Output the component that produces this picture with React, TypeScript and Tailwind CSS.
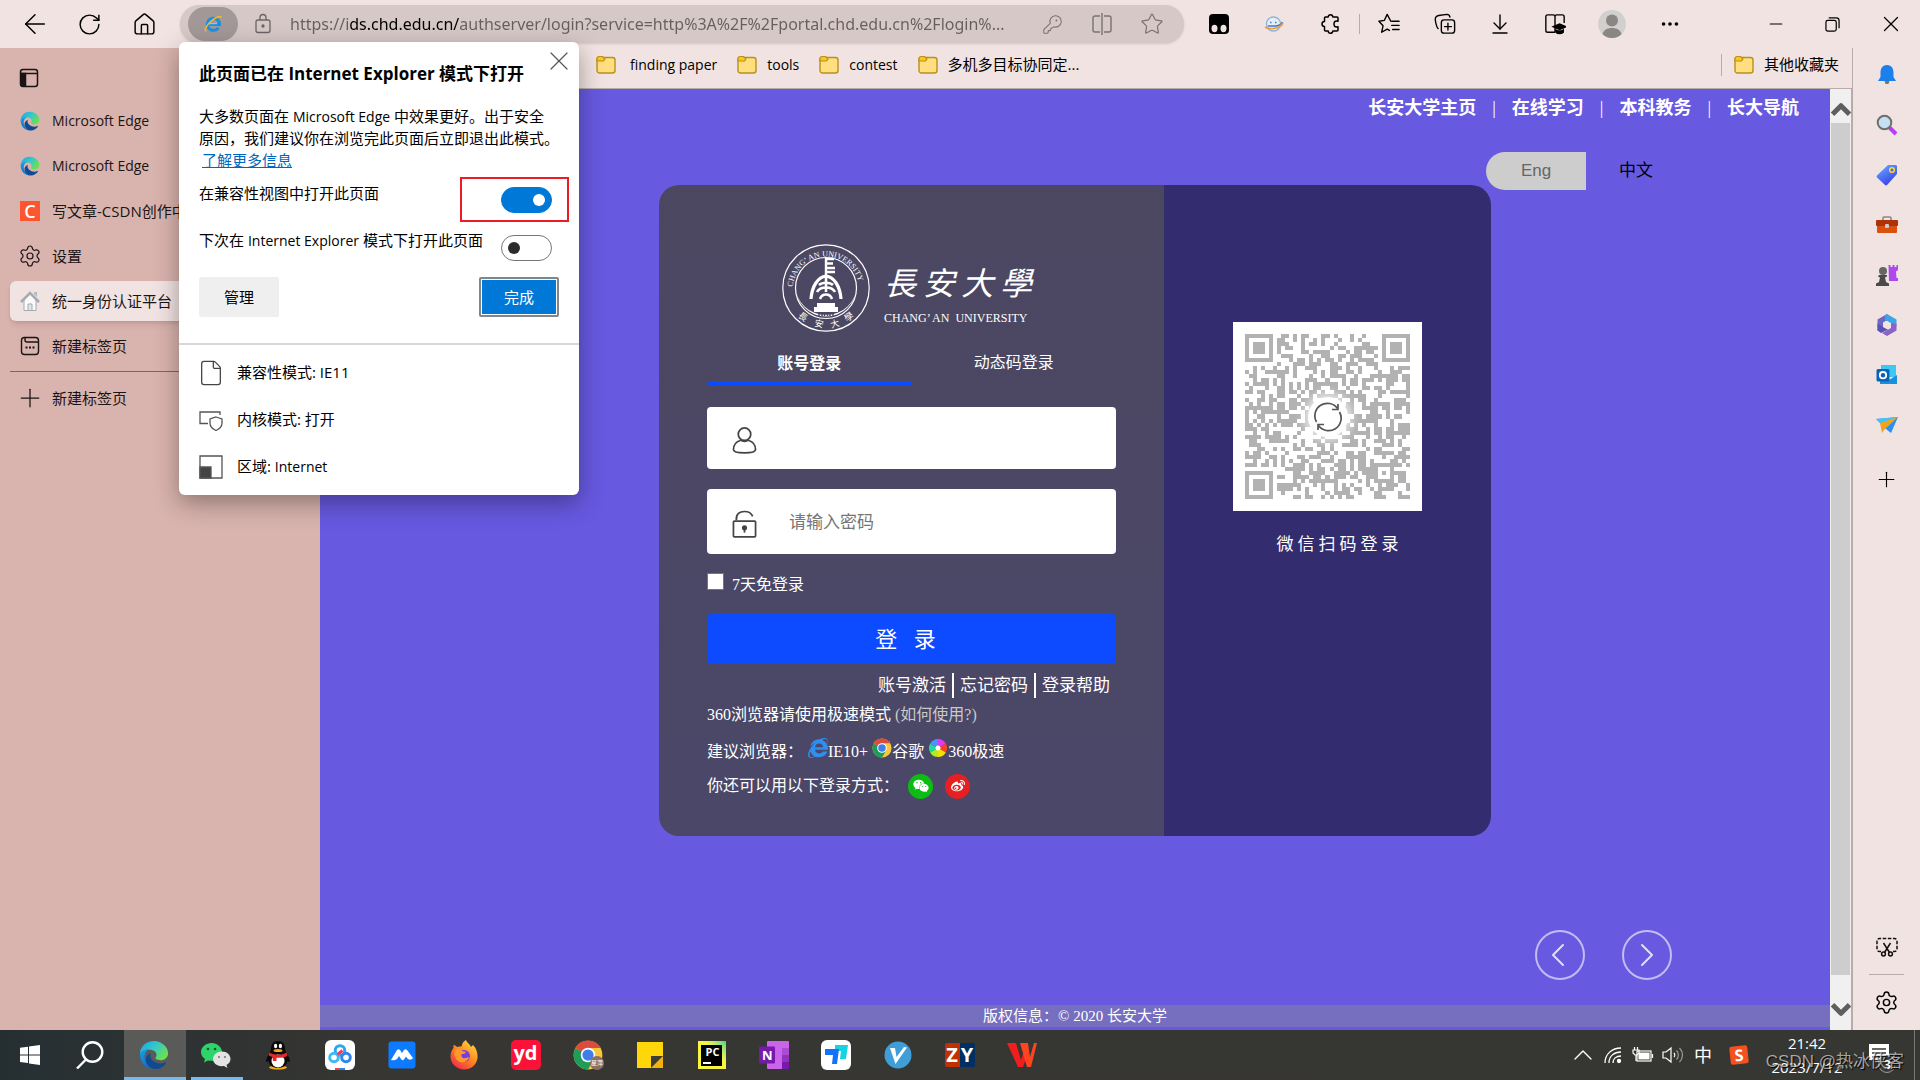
import React from "react";
import {
  ArrowLeft, RotateCw, House, KeyRound, Star, X, Plus, Minus, File, Settings,
  ArrowDownToLine, Ellipsis, ChevronUp, ChevronDown, ChevronLeft, ChevronRight,
} from "lucide-react";
import { FaWeixin, FaWeibo, FaInternetExplorer } from "react-icons/fa";

const ui = "font-['Open_Sans','Noto_Sans_CJK_SC',sans-serif]";
const song = "font-['Liberation_Serif','Noto_Sans_CJK_SC',serif]";

/* ---------- shared icons ---------- */

function EdgeIcon({ className, id }: { className: string; id: string }) {
  return (
    <svg viewBox="0 0 32 32" className={className} aria-hidden="true">
      <defs>
        <linearGradient id={id + "a"} x1="0" y1="0" x2="1" y2="0.6">
          <stop offset="0" stopColor="#1f9fe0" />
          <stop offset="0.5" stopColor="#33c7d0" />
          <stop offset="1" stopColor="#6be04f" />
        </linearGradient>
        <linearGradient id={id + "b"} x1="0" y1="0" x2="0.6" y2="1">
          <stop offset="0" stopColor="#1aa0e2" />
          <stop offset="1" stopColor="#0a6cc9" />
        </linearGradient>
      </defs>
      <path d="M1 15C1 6.500 8 1 16 1s15 6 15 13c0 4.500-3.500 7.500-8 7.500-3.500 0-5.500-1.200-5.500-2.200 0-.8 1.200-1.300 1.200-3.300 0-2.800-2.700-5.500-7.200-5.500C6 10.500 2 13 1 15z" fill={`url(#${id}a)`} />
      <path d="M1 15c1-3 5-5.500 10-5.500-3.500 1.500-5 5-5 8.500C6 25 12 31 17.500 31 8 31.500 1 24.500 1 15z" fill={`url(#${id}b)`} />
      <path d="M12.500 14c-4 1.500-6 5-5 9 1.200 5 5.500 8 10 8 4.800 0 9-2.500 11.300-6.300.4-.7-.2-1.200-.8-.9-1.500.8-3 1.200-5 1.200-6 0-11-4-11-8.500 0-.9.200-1.800.5-2.500z" fill="#114a92" />
    </svg>
  );
}

function IeModeIcon({ className }: { className: string }) {
  return (
    <svg viewBox="0 0 24 24" className={className} fill="none" aria-hidden="true">
      <path d="M18.500 16.500A7.300 7.300 0 1 1 19.800 12.600H8" stroke="#1d8fe0" strokeWidth="3.600" />
      <path d="M7 11.500h10" stroke="#6fd0fb" strokeWidth="1.500" />
      <path d="M3.500 21C1.500 19 5 12 11 7.500S21.500 2 22 4.500" stroke="#f4b92b" strokeWidth="1.800" />
    </svg>
  );
}

function FolderIcon() {
  return (
    <svg viewBox="0 0 20 20" className="size-5 shrink-0" aria-hidden="true">
      <rect x="1" y="2.500" width="18" height="15.500" rx="2.500" fill="#ffdf80" stroke="#b8901c" strokeWidth="1.400" />
      <path d="M1 6V3.500A2 2 0 0 1 3 1.500h3.500L9 4 7.500 6z" fill="#ffc61a" stroke="#b8901c" strokeWidth="1.200" />
    </svg>
  );
}

function ChromeIcon({ className }: { className: string }) {
  return (
    <svg viewBox="0 0 24 24" className={className} aria-hidden="true">
      <circle cx="12" cy="12" r="11.500" fill="#f9c83a" />
      <path d="M12 12 2 6.300A11.500 11.500 0 0 0 12 23.500L17 15z" fill="#1d9c5a" />
      <path d="M12 12 2 6.300A11.500 11.500 0 0 1 22 6.300H12z" fill="#dd4b3e" />
      <circle cx="12" cy="12" r="5.800" fill="#fff" />
      <circle cx="12" cy="12" r="4.500" fill="#3f7ee8" />
    </svg>
  );
}

/* ---------- browser toolbar ---------- */

function Tool({ w, label, children }: { w: string; label: string; children: React.ReactNode }) {
  return (
    <button aria-label={label} className={"flex h-full shrink-0 items-center justify-center " + w}>
      {children}
    </button>
  );
}

function Toolbar() {
  return (
    <header className="flex h-12 shrink-0 items-center bg-[#f1e3e2] text-black">
      <div className="flex h-full w-[180px] shrink-0 items-center pl-[7px]">
        <Tool w="w-[55px]" label="返回"><ArrowLeft size={32} strokeWidth={1.1} /></Tool>
        <Tool w="w-[55px]" label="刷新"><RotateCw size={25} strokeWidth={1.4} /></Tool>
        <Tool w="w-[55px]" label="主页"><House size={25} strokeWidth={1.4} /></Tool>
      </div>
      <div className="flex h-[38px] min-w-0 flex-1 items-center rounded-full bg-[#d6c8c7] pr-2 shadow-sm">
        <button aria-label="Internet Explorer 模式" className="ml-2 flex h-[34px] w-[50px] shrink-0 items-center justify-center rounded-full bg-[#a29897]">
          <IeModeIcon className="size-5" />
        </button>
        <svg viewBox="0 0 20 22" className="mr-[17px] ml-[15px] h-[22px] w-5 shrink-0" fill="none" stroke="#6c6463" strokeWidth="1.300" aria-hidden="true">
          <rect x="3" y="7" width="14" height="12.500" rx="2" />
          <path d="M7 7V4.500a3 3 0 0 1 6 0V7" />
          <circle cx="10" cy="13" r="1" fill="#6c6463" />
        </svg>
        <input
          aria-label="地址栏"
          readOnly
          value="https://ids.chd.edu.cn/authserver/login?service=http%3A%2F%2Fportal.chd.edu.cn%2Flogin%..."
          className="min-w-0 flex-1 bg-[linear-gradient(to_right,#655f5e_58px,#000_58px,#000_170px,#655f5e_170px)] bg-clip-text font-['Noto_Sans',sans-serif] text-base text-transparent outline-none"
        />
        <Tool w="w-[49px]" label="密码"><KeyRound size={21} strokeWidth={1.2} className="text-[#7a7271]" /></Tool>
        <Tool w="w-[50px]" label="分屏">
          <svg viewBox="0 0 20 24" className="h-6 w-5" fill="none" stroke="#7a7271" strokeWidth="1.400"><path d="M8 4H3a2 2 0 0 0-2 2v12a2 2 0 0 0 2 2h5M12 4h5a2 2 0 0 1 2 2v12a2 2 0 0 1-2 2h-5M10 1v22" /></svg>
        </Tool>
        <Tool w="w-[49px]" label="收藏"><Star size={24} strokeWidth={1.2} className="text-[#7a7271]" /></Tool>
      </div>
      <div className="flex h-full shrink-0 items-center pl-[7px]">
        <Tool w="w-[55px]" label="扩展">
          <svg viewBox="0 0 20 20" className="size-5"><rect width="20" height="20" rx="4" fill="#000" /><ellipse cx="5.500" cy="14.500" rx="3" ry="3.700" fill="#f1e3e2" /><ellipse cx="14.500" cy="14.500" rx="3" ry="3.700" fill="#f1e3e2" /></svg>
        </Tool>
        <Tool w="w-[55px]" label="IE Tab">
          <svg viewBox="0 0 20 20" className="size-5" fill="none"><circle cx="9.500" cy="10" r="7" fill="#e6eef7" stroke="#8fb4dc" strokeWidth="1.400" /><path d="M6 8.500h1.500M11 8.500h1.500M4 12h8c3 0 6-2 6.500-4" stroke="#3b7cc9" strokeWidth="1.600" /><path d="M1 13c4 3 15 2 18-4" stroke="#f0a040" strokeWidth="1.800" /></svg>
        </Tool>
        <Tool w="w-[58px]" label="扩展菜单">
          <svg viewBox="0 0 22 22" className="size-[22px]" fill="none" stroke="currentColor" strokeWidth="1.500" strokeLinejoin="round"><path d="M6.500 4h2.700a2.300 2.300 0 0 1 4.600 0H18a1 1 0 0 1 1 1v3.200c-3.300-.7-4 .8-4 2.800s.7 3.500 4 2.800V17a1 1 0 0 1-1 1h-4.200a2.300 2.300 0 0 1-4.600 0H6.500a1 1 0 0 1-1-1v-3.500a2.500 2.500 0 0 1 0-5V5a1 1 0 0 1 1-1z" /></svg>
        </Tool>
        <span className="h-5 w-px bg-[#b8acab]" />
        <Tool w="w-[57px]" label="收藏夹">
          <svg viewBox="0 0 24 24" className="size-[22px]" fill="none" stroke="currentColor" strokeWidth="1.500" strokeLinejoin="round" strokeLinecap="round"><path d="M14 9 10 1.500 7 8 1 9l4.500 5L4 21l6-3.500 2.500 1.500M15 9h8M15 13.500h8M16 18h7" /></svg>
        </Tool>
        <Tool w="w-[55px]" label="集锦">
          <svg viewBox="0 0 24 24" className="size-[22px]" fill="none" stroke="currentColor" strokeWidth="1.500" strokeLinecap="round"><rect x="8" y="7.500" width="14.500" height="14.500" rx="3" /><path d="M15.200 11v7.500M11.500 14.800H19M4.500 17C2.500 15.500 1 7 1.500 5.500S3 3 5 2.700L14 1.500c2 0 3 1 3.400 3" /></svg>
        </Tool>
        <Tool w="w-[55px]" label="下载"><ArrowDownToLine size={24} strokeWidth={1.4} /></Tool>
        <Tool w="w-[55px]" label="阅读">
          <svg viewBox="0 0 24 24" className="size-[22px]" fill="none" stroke="currentColor" strokeWidth="1.500"><path d="M12 3v18M12 21H4a2 2 0 0 1-2-2V4a2 2 0 0 1 2-2h6a2 2 0 0 1 2 2 2 2 0 0 1 2-2h6a2 2 0 0 1 2 2v7" /><path d="m10 15 7-3 7 3-7 3z" fill="#000" /><path d="M13 18.500c2 1.500 6 1.500 8 0v2.500c-2 2-6 2-8 0z" fill="#000" /></svg>
        </Tool>
        <Tool w="w-[60px]" label="个人资料">
          <svg viewBox="0 0 28 28" className="size-7"><circle cx="14" cy="14" r="14" fill="#d2d0ce" /><circle cx="14" cy="10.500" r="6" fill="#8a8683" /><path d="M4.500 24.300C5.500 20 9 18 14 18s8.500 2 9.500 6.300A14 14 0 0 1 4.500 24.300z" fill="#8a8683" /></svg>
        </Tool>
        <Tool w="w-[55px]" label="更多"><Ellipsis size={22} strokeWidth={2} /></Tool>
        <div className="ml-[50px] flex h-full">
          <Tool w="w-[57px]" label="最小化"><Minus size={20} strokeWidth={1.3} /></Tool>
          <Tool w="w-[57px]" label="还原">
            <svg viewBox="0 0 16 16" className="size-[15px]" fill="none" stroke="currentColor" strokeWidth="1.300"><rect x="1" y="3.500" width="11" height="11.500" rx="2" /><path d="M4 1h8a3 3 0 0 1 3 3v8" /></svg>
          </Tool>
          <Tool w="w-[59px]" label="关闭"><X size={26} strokeWidth={1.2} /></Tool>
        </div>
      </div>
    </header>
  );
}

/* ---------- vertical tabs ---------- */

function Tab({ icon, text, active, latin }: { icon: React.ReactNode; text: string; active?: boolean; latin?: boolean }) {
  return (
    <li className="flex h-[45px] items-center">
      <button
        className={
          "flex h-10 w-full items-center gap-3 overflow-hidden whitespace-nowrap rounded-md pl-[10px] text-left " +
          (active ? "bg-[#f1e3e2] shadow-md" : "")
        }
      >
        {icon}
        <span className={latin ? "text-sm" : ""}>{text}</span>
      </button>
    </li>
  );
}

function TabStrip() {
  return (
    <aside className="w-80 shrink-0 bg-[#d9b3ad] pl-[10px] text-[15px] leading-5 text-[#1b1414]">
      <button aria-label="标签页操作" className="mt-[9px] flex h-[41px] items-center pl-[9px]">
        <svg viewBox="0 0 20 20" className="size-5" fill="none" stroke="#1b1414" strokeWidth="1.500"><rect x="1.500" y="1.500" width="17" height="17" rx="2.500" /><path d="M2 5.500h16" /><path d="M2 5.500h4.500V18H3.500L2 17z" fill="#1b1414" /></svg>
      </button>
      <ul>
        <Tab latin icon={<EdgeIcon id="t1" className="size-5 shrink-0" />} text="Microsoft Edge" />
        <Tab latin icon={<EdgeIcon id="t2" className="size-5 shrink-0" />} text="Microsoft Edge" />
        <Tab
          icon={<span className="flex size-5 shrink-0 items-center justify-center bg-[#fc5531] text-lg font-semibold text-white">C</span>}
          text="写文章-CSDN创作中心"
        />
        <Tab icon={<Settings size={24} strokeWidth={1.2} className="-mx-0.5 shrink-0" />} text="设置" />
        <Tab
          active
          icon={
            <svg viewBox="0 0 20 20" className="size-5 shrink-0"><path d="M4 9v10.500h12V9L10 3z" fill="#fafafa" stroke="#a5abb0" /><path d="M1 11 10 2l9 9" fill="none" stroke="#a5abb0" strokeWidth="2.500" /><path d="M14 1h3v5l-3-3z" fill="#b5babf" /><path d="M8 13h4v6.500H8z" fill="#e2e4e6" stroke="#a5abb0" /></svg>
          }
          text="统一身份认证平台"
        />
        <Tab
          icon={
            <svg viewBox="0 0 20 20" className="size-5 shrink-0" fill="none" stroke="#1b1414" strokeWidth="1.400"><rect x="1.500" y="1.500" width="17" height="17" rx="3" /><path d="M5 1.500V4a2 2 0 0 0 2 2h11" /><path d="M5.500 11.500h2M9 11.500h2M12.500 11.500h2" strokeWidth="2" /></svg>
          }
          text="新建标签页"
        />
      </ul>
      <hr className="mt-[3px] mb-[3px] border-[#7d6562]" />
      <ul>
        <Tab icon={<Plus size={30} strokeWidth={1} className="-mx-[5px] shrink-0" />} text="新建标签页" />
      </ul>
    </aside>
  );
}

/* ---------- bookmarks ---------- */

function Bookmarks() {
  return (
    <nav className="flex h-[41px] shrink-0 items-center border-b border-[#b8acab] bg-[#f1e3e2] pb-1.5 pl-[276px] text-sm text-black">
      <a href="#" className="flex items-center gap-[14px]"><FolderIcon />finding paper</a>
      <a href="#" className="ml-5 flex items-center gap-[10px]"><FolderIcon />tools</a>
      <a href="#" className="ml-5 flex items-center gap-[10px]"><FolderIcon />contest</a>
      <a href="#" className="ml-5 flex items-center gap-[10px] text-[15px]"><FolderIcon />多机多目标协同定...</a>
      <a href="#" className="mr-[13px] ml-auto flex items-center gap-[10px] border-l border-[#b8acab] pl-3 text-[15px]"><FolderIcon />其他收藏夹</a>
    </nav>
  );
}

/* ---------- login page ---------- */

const QR_SIZE = 41;

function qrPath() {
  let seed = 90731;
  const next = () => {
    seed = (seed * 1103515245 + 12345) % 2147483648;
    return seed / 2147483648;
  };
  const finders = [[0, 0], [QR_SIZE - 7, 0], [0, QR_SIZE - 7]];
  let d = "";
  for (let y = 0; y < QR_SIZE; y++) {
    for (let x = 0; x < QR_SIZE; x++) {
      let on = next() > 0.48;
      for (const [fx, fy] of finders) {
        const dist = Math.max(Math.abs(x - fx - 3), Math.abs(y - fy - 3));
        if (dist <= 4) on = dist === 3 || dist <= 1;
      }
      const align = Math.max(Math.abs(x - 34), Math.abs(y - 34));
      if (align <= 2) on = align !== 1;
      if (on) d += `M${x} ${y}h1v1h-1z`;
    }
  }
  return d;
}

const qr = qrPath();

function Emblem() {
  return (
    <svg viewBox="0 0 88 88" className="size-[88px]" fill="none" stroke="#fff" aria-hidden="true">
      <defs>
        <path id="ring" d="M10.500 46A33.500 33.500 0 1 1 77.500 46" />
      </defs>
      <circle cx="44" cy="44" r="43.200" strokeWidth="1.200" />
      <circle cx="44" cy="44" r="30.500" strokeWidth="1.200" />
      <path d="M13.500 42a30.500 30.500 0 1 0 61 0 27.500 26 0 1 1-61 0z" fill="#fff" stroke="none" />
      <path d="M44 14v19M44 15h8M44 19.500h7M44 24h9M44 28h9" strokeWidth="2.400" />
      <path d="M29 55c1-13 7-22 15-23 8 1 14 10 15 23" strokeWidth="3.200" />
      <path d="M35 48c3-6 15-6 18 0M38 55c2-6 10-6 12 0M37 41c3-3 11-3 14 0M44 33v15" strokeWidth="2.600" />
      <path d="M35 59h18v4h3v5H32v-5h3z" fill="#fff" stroke="none" />
      <path d="M37 72v-3h3v3M42.500 72v-3h3v3M48 72v-3h3v3" stroke="#4c4761" strokeWidth="1.500" />
      <text fill="#fff" stroke="none" fontSize="8" fontFamily="Liberation Serif"><textPath href="#ring" startOffset="3">CHANG’ AN UNIVERSITY</textPath></text>
      <g fill="#fff" stroke="none" fontSize="9" textAnchor="middle" fontFamily="Noto Sans CJK SC">
        <text x="21" y="76" transform="rotate(35 21 73)">長</text>
        <text x="37" y="83" transform="rotate(12 37 80)">安</text>
        <text x="53" y="83" transform="rotate(-14 53 80)">大</text>
        <text x="67" y="76" transform="rotate(-35 67 73)">學</text>
      </g>
    </svg>
  );
}

function Field({ id, label, type, placeholder, height, icon }: {
  id: string; label: string; type: string; placeholder?: string; height: string; icon: React.ReactNode;
}) {
  return (
    <div className={"flex items-center rounded bg-white pl-[25px] " + height}>
      <label htmlFor={id} aria-label={label} className="pt-1">{icon}</label>
      <input
        id={id}
        type={type}
        placeholder={placeholder}
        className="ml-8 h-full min-w-0 flex-1 bg-transparent pt-0.5 text-[17px] text-gray-800 outline-none placeholder:text-[#757575]"
      />
    </div>
  );
}

function LoginCard() {
  return (
    <section className={"mx-auto mt-[58px] flex min-h-[651px] w-[832px] max-w-full overflow-hidden rounded-[20px] text-base text-white " + song}>
      <div className="w-[505px] bg-linear-to-b from-[#4c4761] to-[#4a4769] px-12 pt-[59px]">
        <div className="flex h-[88px] items-center gap-[14px] pl-[75px]">
          <Emblem />
          <div className="w-[148px] pt-3 whitespace-nowrap">
            <p className="flex justify-between text-[32px] leading-[48px] italic">
              <span>長</span><span>安</span><span>大</span><span>學</span>
            </p>
            <p className="text-xs leading-5">CHANG’ AN &nbsp;UNIVERSITY</p>
          </div>
        </div>

        <div className="mt-3 flex h-[42px] text-center" role="tablist">
          <button role="tab" aria-selected="true" className="flex-1 border-b-[5px] border-[#0c4bff] pt-0.5 font-bold">账号登录</button>
          <button role="tab" aria-selected="false" className="flex-1 pb-[5px]">动态码登录</button>
        </div>

        <form className="mt-[21px]">
          <Field
            id="user" label="账号" type="text" height="h-[62px]"
            icon={<svg viewBox="0 0 26 30" className="h-[30px] w-[25px]" fill="none" stroke="#444" strokeWidth="1.800"><circle cx="13" cy="9" r="6.500" /><path d="M8.500 15.500C4 17 1.500 21 1.500 25c0 2.500 4 3.500 11.500 3.500S24.500 27.500 24.500 25c0-4-2.500-8-7-9.500" /><path d="M8.500 15c3 1.800 6 1.800 9 0" /></svg>}
          />
          <div className="mt-5">
            <Field
              id="pwd" label="密码" type="password" placeholder="请输入密码" height="h-[65px]"
              icon={<svg viewBox="0 0 26 30" className="h-[30px] w-[25px]" fill="none" stroke="#444" strokeWidth="1.800"><rect x="1.500" y="12" width="23" height="16.500" rx="1" /><path d="M4.500 11C4 4 8 2 13 2c4 0 7 1.500 8.500 5" /><circle cx="13" cy="19" r="1.800" fill="#444" /><path d="M13 19v5" /></svg>}
            />
          </div>
          <div className="mt-[19px] flex items-start gap-2">
            <input id="keep" type="checkbox" className="size-[17px] appearance-none border border-[#777] bg-white checked:bg-[#0c4bff]" />
            <label htmlFor="keep" className="leading-6">7天免登录</label>
          </div>
          <button type="submit" className="mt-[17px] h-[50px] w-full rounded bg-[#0c4bff] pr-3 text-[22px] whitespace-pre">登   录</button>
        </form>

        <div className="mt-[9px] flex justify-end pr-0.5 text-[17px] leading-[25px]">
          <a href="#" className="border-r-2 border-white px-1.5">账号激活</a>
          <a href="#" className="border-r-2 border-white px-1.5">忘记密码</a>
          <a href="#" className="pr-1 pl-1.5">登录帮助</a>
        </div>
        <p className="mt-[5px] leading-6">360浏览器请使用极速模式 <a href="#" className="text-[#c9c9c9]">(如何使用?)</a></p>
        <p className="mt-[13px] flex h-6 items-center">
          建议浏览器：
          <FaInternetExplorer className="mb-2 ml-[5px] text-[#2f8ff0]" size={20} />IE10+
          <ChromeIcon className="mb-2 ml-1 size-5" />谷歌
          <svg viewBox="0 0 20 20" className="mb-2 ml-1 size-5" aria-hidden="true">
            <path d="M10 10V1a9 9 0 0 1 7.800 4.500z" fill="#e03af0" />
            <path d="m10 10 7.800-4.500a9 9 0 0 1 0 9z" fill="#ff4020" />
            <path d="m10 10 7.800 4.500A9 9 0 0 1 10 19z" fill="#f4e000" />
            <path d="M10 10v9a9 9 0 0 1-7.800-4.500z" fill="#b0ea20" />
            <path d="m10 10-7.800 4.500a9 9 0 0 1 0-9z" fill="#20d8a0" />
            <path d="M10 10 2.200 5.500A9 9 0 0 1 10 1z" fill="#4a90ff" />
            <circle cx="10" cy="10" r="2.500" fill="#fff" />
          </svg>360极速
        </p>
        <div className="mt-2 flex h-7 items-center">
          你还可以用以下登录方式：
          <a href="#" aria-label="微信登录" className="ml-[9px] flex size-[25px] items-center justify-center rounded-full bg-[#0dbc12]"><FaWeixin size={16} /></a>
          <a href="#" aria-label="微博登录" className="ml-3 flex size-[25px] items-center justify-center rounded-full bg-[#e62020]"><FaWeibo size={14} /></a>
        </div>
      </div>

      <div className="flex flex-1 flex-col items-center bg-[#332c6e] pt-[137px]">
        <div className="relative bg-white p-3">
          <svg viewBox="0 0 41 41" className="size-[165px]" shapeRendering="crispEdges" role="img" aria-label="二维码">
            <path d={qr} fill="#b2b2b2" />
          </svg>
          <button aria-label="刷新二维码" className="absolute top-1/2 left-1/2 flex size-10 -translate-x-1/2 -translate-y-1/2 items-center justify-center rounded-full bg-white shadow-[0_0_10px_4px_rgba(255,255,255,0.7)]">
            <svg viewBox="0 0 30 30" className="size-[30px]" fill="none" stroke="#555" strokeWidth="1.700"><path d="M3.500 20A12.500 12.500 0 0 1 24.500 6.500M26.500 10A12.500 12.500 0 0 1 5.500 23.500" /><path d="M25 2v5.500h-6M5 28v-5.500h6" /></svg>
          </button>
        </div>
        <p className="mt-[22px] pl-6 text-[17px] leading-6 tracking-[4px]">微信扫码登录</p>
      </div>
    </section>
  );
}

function LoginPage() {
  return (
    <main className="relative flex min-w-0 flex-1 flex-col bg-[#6759e0]">
      <nav className={"flex h-[38px] items-center justify-end pr-[31px] text-lg text-white " + song}>
        <a href="#" className="font-bold">长安大学主页</a><span className="mx-4">|</span>
        <a href="#" className="font-bold">在线学习</a><span className="mx-4">|</span>
        <a href="#" className="font-bold">本科教务</a><span className="mx-4">|</span>
        <a href="#" className="font-bold">长大导航</a>
      </nav>
      <div className="absolute top-[63px] right-[144px] z-10 flex h-[38px] font-['Liberation_Sans','Noto_Sans_CJK_SC',sans-serif] text-[17px]">
        <button className="w-[100px] rounded-l-[19px] bg-[#cdcdcd] text-[#666]">Eng</button>
        <button className="w-[100px] text-black">中文</button>
      </div>
      <LoginCard />
      <div className="mt-auto mb-[25px] flex justify-end gap-[37px] pr-[158px] text-white/80">
        <button aria-label="上一张" className="flex size-[50px] items-center justify-center rounded-full border-2 border-white/60"><ChevronLeft size={40} strokeWidth={1.2} className="mr-1 shrink-0" /></button>
        <button aria-label="下一张" className="flex size-[50px] items-center justify-center rounded-full border-2 border-white/60"><ChevronRight size={40} strokeWidth={1.2} className="shrink-0" /></button>
      </div>
      <footer className={"mb-[3px] h-[22px] bg-[#766ebe] text-center text-[15px] leading-[22px] text-white " + song}>版权信息：© 2020 长安大学</footer>
    </main>
  );
}

function Scrollbar() {
  return (
    <div className="flex w-[22px] shrink-0 flex-col border-r border-[#b8acab] bg-[#f0f0f0] px-px text-[#5e5e5e]">
      <button aria-label="向上滚动" className="flex h-[34px] items-center justify-center pt-2"><ChevronUp size={34} strokeWidth={3.5} strokeLinecap="butt" className="shrink-0" /></button>
      <div className="flex-1 bg-[#cdcdcd]" />
      <button aria-label="向下滚动" className="flex h-[55px] items-center justify-center pt-3"><ChevronDown size={34} strokeWidth={3.5} strokeLinecap="butt" className="shrink-0" /></button>
    </div>
  );
}

/* ---------- edge sidebar ---------- */

function SideItem({ label, children }: { label: string; children: React.ReactNode }) {
  return <button aria-label={label} className="flex h-[50px] w-full items-center justify-center">{children}</button>;
}

function Sidebar() {
  const s = "size-[22px]";
  return (
    <aside className="flex w-[68px] shrink-0 flex-col items-center border-l border-[#b8acab] bg-[#f1e3e2] pt-[2px] text-black">
      <SideItem label="通知"><svg viewBox="0 0 22 22" className={s}><path d="M8.500 17h5l-1 3h-3z" fill="#777" /><path d="M11 1c-5 0-6.500 4-6.500 8v4L2 17h18l-2.500-4V9c0-4-1.500-8-6.500-8z" fill="#1c80ea" /></svg></SideItem>
      <SideItem label="搜索"><svg viewBox="0 0 22 22" className={s}><path d="m13.500 13.500 6.500 6.500" stroke="#b93cf0" strokeWidth="4" /><circle cx="8.500" cy="8.500" r="6.800" fill="#c5e0f3" stroke="#6e6e6e" strokeWidth="2" /></svg></SideItem>
      <SideItem label="购物"><svg viewBox="0 0 22 22" className={s}><defs><linearGradient id="tag" x1="0" y1="0" x2="0.600" y2="1"><stop offset="0" stopColor="#68b4ff" /><stop offset="1" stopColor="#3b3fe8" /></linearGradient></defs><path d="M12 1h8l1 1v8L11 21c-.6.500-1.300.500-2 0L1 13.500c-.6-.7-.6-1.300 0-2z" fill="url(#tag)" /><circle cx="16" cy="6" r="2.300" fill="#4a70d8" stroke="#ffd836" strokeWidth="1.500" /></svg></SideItem>
      <SideItem label="工具"><svg viewBox="0 0 22 22" className={s}><path d="M7 6V4a1 1 0 0 1 1-1h6a1 1 0 0 1 1 1v2" fill="none" stroke="#8a8a8a" strokeWidth="1.600" /><rect x="1" y="10" width="20" height="9" rx="1" fill="#d9500f" /><rect y="6" width="22" height="6" rx="1" fill="#ad3208" /><rect x="9" y="10" width="4" height="4" rx="1" fill="#ccc" /></svg></SideItem>
      <SideItem label="游戏"><svg viewBox="0 0 22 22" className={s}><path d="M12.500 1h2v2h2V1h2v2h2V1h1.500v5l-2 1.500.5 6.500h1.500v3h-9z" fill="#b048f0" /><circle cx="7" cy="7" r="4" fill="#666" /><path d="M3 11h8v1.500l-2 1 1 4.500 3 1.500V22H0v-2.500L3 18l1-4.500-2-1z" fill="#4a4a4a" /></svg></SideItem>
      <SideItem label="Microsoft 365"><svg viewBox="0 0 22 22" className={s}><path d="M11 0 1.500 5.500v11L7 13.500v-5L13 5z" fill="#6d68c8" /><path d="M11 0 20.500 5.500v7L14.500 9 9 6V1.200z" fill="#3aa5e8" /><path d="M20.500 10v6.500L11 22l-5-3 9-5V9z" fill="#8a62c8" /><path d="M1.500 9.500 7 13l5 2.500L5 19l-3.500-2.500z" fill="#5a50b8" /><path d="m7.500 9 3.500-2 3.500 2v4L11 15l-3.500-2z" fill="#f1e3e2" /></svg></SideItem>
      <SideItem label="Outlook"><svg viewBox="0 0 22 22" className={s}><rect x="5" y="1" width="15" height="12" fill="#3cc8f4" /><path d="M4 20V11l9 5 8-5v9z" fill="#1a8fdc" /><rect x="0.500" y="5" width="13" height="12.500" rx="1.500" fill="#0a63b8" /><circle cx="7" cy="11.200" r="3.200" fill="none" stroke="#fff" strokeWidth="1.800" /></svg></SideItem>
      <SideItem label="Drop"><svg viewBox="0 0 22 22" className={s}><path d="M0 5 22 3 15 19l-5-4z" fill="#2d8ef0" /><path d="M0 5 22 3 7 11z" fill="#43c2f5" /><path d="m4 9 18-6L8 16 6 19z" fill="#f0a31c" /></svg></SideItem>
      <SideItem label="添加"><Plus size={25} strokeWidth={1.1} className="mt-2" /></SideItem>
      <div className="mt-auto mb-[5px] flex w-full flex-col items-center">
        <SideItem label="截图">
          <svg viewBox="0 0 22 22" className={s} fill="none" stroke="#111" strokeWidth="1.500"><path d="M5 15.500H3.500a2.500 2.500 0 0 1-2.500-2.500V5a2.500 2.500 0 0 1 2.500-2.500h15A2.500 2.500 0 0 1 21 5v8a2.500 2.500 0 0 1-2.500 2.500H17" strokeDasharray="3.500 1.600" /><path d="m7.500 7 6 9.500M14.500 7l-6 9.500" /><circle cx="7.500" cy="18" r="1.900" /><circle cx="14.500" cy="18" r="1.900" /></svg>
        </SideItem>
        <hr className="mt-[2px] w-[35px] border-[#b8acab]" />
        <SideItem label="设置"><Settings size={25} strokeWidth={1.4} className="mt-1" /></SideItem>
      </div>
    </aside>
  );
}

/* ---------- IE mode popup ---------- */

function Toggle({ id, on }: { id: string; on?: boolean }) {
  return (
    <input
      id={id}
      type="checkbox"
      role="switch"
      defaultChecked={on}
      className="relative h-[26px] w-[51px] shrink-0 appearance-none rounded-full border border-[#767676] bg-white before:absolute before:top-[6px] before:left-[6px] before:size-3 before:rounded-full before:bg-[#2b2b2b] checked:border-[#0078d7] checked:bg-[#0078d7] checked:before:left-[31px] checked:before:bg-white"
    />
  );
}

function IePopup() {
  return (
    <section role="dialog" aria-label="Internet Explorer 模式" className="absolute top-[42px] left-[179px] z-20 w-[400px] rounded-md bg-white pt-[18px] pb-[5px] text-[15px] text-black shadow-[0_8px_24px_rgba(0,0,0,0.35)]">
      <button aria-label="关闭" className="absolute top-[3px] right-1 text-[#555]"><X size={32} strokeWidth={0.9} /></button>
      <div className="px-5">
        <h2 className="text-[17px] leading-7 font-bold whitespace-nowrap">此页面已在 Internet Explorer 模式下打开</h2>
        <p className="mt-[17px] text-[15px] leading-[22px] whitespace-nowrap">
          大多数页面在 <span className="text-sm">Microsoft Edge</span> 中效果更好。出于安全<br />
          原因，我们建议你在浏览完此页面后立即退出此模式。<br />
          <a href="#" className="ml-[3px] text-[#0067c0] underline">了解更多信息</a>
        </p>
        <div className="-mr-[10px] mt-[6px] flex h-[45px] items-start justify-between">
          <label htmlFor="compat" className="pt-[5px] leading-[22px]">在兼容性视图中打开此页面</label>
          <div className="flex h-[45px] w-[109px] items-center justify-end border-2 border-[#ed1c24] pr-[15px]"><Toggle id="compat" on /></div>
        </div>
        <div className="mt-[7px] mr-[7px] flex h-[34px] items-start justify-between">
          <label htmlFor="next" className="leading-[22px] whitespace-nowrap">下次在 <span className="text-sm">Internet Explorer</span> 模式下打开此页面</label>
          <div className="pt-[6px]"><Toggle id="next" /></div>
        </div>
        <div className="mt-[14px] flex justify-between">
          <button className="h-10 w-20 rounded-xs bg-[#efefef]">管理</button>
          <button className="h-10 w-20 rounded-xs border-2 border-[#7f868c] bg-[#0078d7] text-white outline-1 -outline-offset-3 outline-white">完成</button>
        </div>
      </div>
      <hr className="mt-[26px] border-t-2 border-[#d8d8d8]" />
      <ul className="px-5 pt-1 [&>li]:flex [&>li]:h-[47px] [&>li]:items-center [&>li]:gap-[14px]">
        <li><File size={28} strokeWidth={1.1} className="-mx-0.5 text-[#444]" /><span>兼容性模式: IE11</span></li>
        <li>
          <svg viewBox="0 0 24 24" className="size-6" fill="none" stroke="#555" strokeWidth="1.300"><path d="M9 15.500H1V4h20v3" /><path d="m17 9 6 2v4c0 3.500-2.500 6-6 7.500-3.500-1.500-6-4-6-7.500v-4z" /></svg>
          <span>内核模式: 打开</span>
        </li>
        <li>
          <svg viewBox="0 0 24 24" className="size-6" fill="none" stroke="#555" strokeWidth="1.300"><path d="M1 1h22v22H1z" /><path d="M1 12h11v11H1z" fill="#444" /></svg>
          <span>区域: <span className="text-sm">Internet</span></span>
        </li>
      </ul>
    </section>
  );
}

/* ---------- taskbar ---------- */

function Task({ label, children, state }: { label: string; children: React.ReactNode; state?: "active" | "open" }) {
  return (
    <button
      aria-label={label}
      className={"relative flex h-full w-[62px] shrink-0 items-center justify-center pr-[3px] " + (state === "active" ? "bg-[#5a5a59]" : "")}
    >
      {children}
      {state === "active" && <span className="absolute inset-x-0 bottom-0 h-[3px] bg-[#76b9ed]" />}
      {state === "open" && <span className="absolute inset-x-[5px] bottom-0 h-[3px] bg-[#76b9ed]" />}
    </button>
  );
}

function Taskbar() {
  const s = "size-[30px]";
  return (
    <footer className="relative flex h-[50px] shrink-0 items-center bg-linear-to-r from-[#252f32] via-[#373632] via-20% to-[#363632] text-white">
      <Task label="开始"><svg viewBox="0 0 20 20" className="size-5" fill="#fff"><path d="M0 2.800 8 1.700v7.700H0zM9 1.500 20 0v9.400H9zM0 10.400h8v7.700l-8-1.100zM9 10.400h11V20L9 18.400z" /></svg></Task>
      <Task label="搜索"><svg viewBox="0 0 28 28" className="mr-1 size-7" fill="none" stroke="#fff" strokeWidth="2.400"><circle cx="16.500" cy="11" r="9.800" /><path d="m10 18.500-9 9" /></svg></Task>
      <Task label="Microsoft Edge" state="active"><EdgeIcon id="tb" className={s} /></Task>
      <Task label="微信" state="open">
        <svg viewBox="0 0 30 30" className={s}><path d="M10.500 3C5 3 0 7 0 12c0 3 1.500 5.300 4 7l-1 3.500 4-2c6 1.500 14-2 14-8.500C21 7 16 3 10.500 3z" fill="#2fd36b" /><circle cx="7" cy="9" r="1.300" fill="#135c2c" /><circle cx="14" cy="9" r="1.300" fill="#135c2c" /><path d="M21 11.500c-5 0-9 3.500-9 7.500s4 8 11 7l3.500 2-1-3c2.500-1.500 4-3.500 4-6 0-4-3.500-7.500-8.500-7.500z" fill="#e3e3e3" /><circle cx="18" cy="17" r="1.100" fill="#777" /><circle cx="24" cy="17" r="1.100" fill="#777" /></svg>
      </Task>
      <Task label="QQ">
        <svg viewBox="0 0 30 30" className={s}><ellipse cx="15" cy="27.500" rx="9" ry="2" fill="#f5a81c" /><path d="M15 1c-5 0-7 3.500-7 8 0 3-5 8-5 13l2.500-1c1 5 5 7 9.500 7s8.500-2 9.500-7l2.500 1c0-5-5-10-5-13 0-4.500-2-8-7-8z" fill="#0a0a0a" /><ellipse cx="15" cy="21" rx="6.500" ry="6.500" fill="#fff" /><ellipse cx="12.600" cy="6" rx="1.600" ry="2.300" fill="#fff" /><ellipse cx="17.400" cy="6" rx="1.600" ry="2.300" fill="#fff" /><ellipse cx="15" cy="10.500" rx="4.500" ry="1.600" fill="#f5a81c" /><path d="M6.500 12.500c5 3 12 3 17 0l1 3.500c-3 1.500-7 2-11 1.800V21h-3.500l-.5-4-4-1.500z" fill="#e6262b" /></svg>
      </Task>
      <Task label="百度网盘">
        <svg viewBox="0 0 30 30" className={s}><rect width="30" height="30" rx="6" fill="#fff" /><g fill="none" strokeWidth="3"><circle cx="15" cy="10.500" r="4.800" stroke="#2da5f7" /><circle cx="9" cy="17.500" r="4.300" stroke="#3fbaf8" /><circle cx="21" cy="17.500" r="4.300" stroke="#2f86ee" /><path d="m12.500 14.500 5-4" stroke="#f0405a" /></g><path d="M10 28h5v2h-5z" fill="#f04050" /><path d="M15 28h5v2h-5z" fill="#2f86ee" /></svg>
      </Task>
      <Task label="腾讯会议"><svg viewBox="0 0 30 30" className={s}><rect x="1.500" y="1.500" width="27" height="27" rx="3" fill="#0d7bff" /><path d="m4 20 6-10c1-1.300 2-1 3 0l2 3 2-3c1-1.300 2-1 3 0l6 8c-1.500 2-4 2.500-6 0l-1-1.500-2 3c-1 1.300-2 1-3-.5l-2-3c-2 4-4 5-8 4z" fill="#fff" /></svg></Task>
      <Task label="Firefox">
        <svg viewBox="0 0 30 30" className={s}><defs><linearGradient id="ff" x1="0.900" y1="0" x2="0.200" y2="1"><stop offset="0" stopColor="#ffe14a" /><stop offset="0.500" stopColor="#ff8a1f" /><stop offset="1" stopColor="#f0254f" /></linearGradient></defs><path d="M17 0c1 3 4 4 5 7l2-2c3 3 5 8 4.500 13C27.500 25 22 29.500 15 29.500S1.500 24 1.500 16.500c0-4 1.500-6.500 3-8.500V5c1.500 0 2.500 1.500 4 2 1-.5 2-.5 4-.5C13 3 15 1 17 0z" fill="url(#ff)" /><circle cx="15" cy="16" r="6" fill="#7a3be0" /><path d="M5 11c3-3 7-2 8 0l4 1c-1 2-3 2-4 2-1 1-1 3 1 4 2 .5 4 0 6-1-1 4-5 6-9 5-4-1.500-6-6-6-11z" fill="#ff9a2a" /></svg>
      </Task>
      <Task label="有道"><span className="flex size-[30px] items-center justify-center rounded-[5px] bg-[#fa1238] pb-1 text-xl font-bold">yd</span></Task>
      <Task label="Chrome">
        <ChromeIcon className={s} />
        <span className="absolute right-4 bottom-2.5 flex size-3.5 items-center justify-center rounded-full bg-[#8d6e63] text-[6px]">星萍</span>
      </Task>
      <Task label="便笺"><svg viewBox="0 0 30 30" className={s}><path d="M2 2h26v15l-11 11H2z" fill="#ffd60a" /><path d="M28 16v12H16z" fill="#f5b20c" /><path d="M16 28V16h12z" fill="#3f3b35" /></svg></Task>
      <Task label="PyCharm"><span className="flex size-7 items-center justify-center bg-linear-to-tr from-[#f8f541] from-60% to-[#21d789]"><span className="flex size-[21px] flex-col bg-black pl-0.5 text-[11px] leading-[13px] font-bold">PC<span className="mt-1 h-[2px] w-2 bg-white" /></span></span></Task>
      <Task label="OneNote"><svg viewBox="0 0 30 30" className={s}><rect x="8" y="1" width="22" height="28" rx="1" fill="#ca64ea" /><path d="M23 8h7v7h-7z" fill="#ae4bd5" /><path d="M23 15h7v7h-7z" fill="#9332bf" /><path d="M23 22h7v7h-7z" fill="#7719aa" /><rect y="6.500" width="16" height="17" rx="1" fill="#7719aa" /><text x="3" y="20" fontSize="13" fontWeight="700" fill="#fff" fontFamily="Open Sans">N</text></svg></Task>
      <Task label="TIM"><svg viewBox="0 0 30 30" className={s}><rect width="30" height="30" rx="6" fill="#fff" /><path d="M14 5h13l-2 14h-6l1-8h-6z" fill="#16d3df" /><path d="M4 9h14l-2 15h-5l1-9H4z" fill="#1372f5" /></svg></Task>
      <Task label="VNote"><svg viewBox="0 0 30 30" className={s}><circle cx="15" cy="15" r="13.500" fill="#3f9ed8" /><path d="M7 8h5l1.500 9L21 7l3 .5L12.500 24z" fill="#fff" /></svg></Task>
      <Task label="ZY"><span className="flex h-6 text-xl leading-6 font-bold"><span className="w-[15px] rounded-l-xs bg-[#c13000] text-center">Z</span><span className="w-[15px] rounded-r-xs bg-[#002f63] text-center">Y</span></span></Task>
      <Task label="WPS"><svg viewBox="0 0 30 30" className={s}><path d="M0 3h9l5 17 3-10h5l-6 17h-5z" fill="#f01f1f" /><path d="m13 3 8 0 2 14 4-14h3l-6 24h-4z" fill="#ff4422" /></svg></Task>

      <div className="ml-auto flex h-full items-center pr-[5px]">
        <div className="flex items-center">
          <Tool w="w-[30px]" label="显示隐藏的图标"><ChevronUp size={32} strokeWidth={1} className="shrink-0" /></Tool>
          <Tool w="w-[30px]" label="网络"><svg viewBox="0 0 18 18" className="size-[18px]" fill="none" stroke="#fff" strokeWidth="1.300"><path d="M1 17C1 8 8 2 17 2M5 17C5 10 10 6 17 6M9 17c0-4 3-7 8-7" /><circle cx="15" cy="15" r="1.500" fill="#fff" /></svg></Tool>
          <Tool w="w-[30px]" label="电池"><svg viewBox="0 0 22 16" className="h-4 w-[22px]" fill="none" stroke="#fff" strokeWidth="1.200"><rect x="5" y="4" width="14" height="10" /><path d="M7 6h10v6H7z" fill="#fff" /><path d="M20.500 7v4M1 3h6v3l-2 2H3L1 6zM2.500 3V0M5.500 3V0M4 8v6" /></svg></Tool>
          <Tool w="w-[30px]" label="音量"><svg viewBox="0 0 22 20" className="h-5 w-[22px]" fill="none" stroke="#fff" strokeWidth="1.200"><path d="M1 7h3l5-4v14l-5-4H1zM12 8c1 1 1 3 0 4" /><path d="M14.500 5.500c2.500 2.500 2.500 6.500 0 9M17.500 3c4 4 4 10 0 14" opacity="0.500" /></svg></Tool>
          <button className="w-[30px] text-lg leading-6">中</button>
          <Tool w="w-[42px]" label="搜狗输入法"><span className="flex size-[18px] -rotate-6 items-center justify-center rounded-xs bg-[#f4511e] text-base leading-4 font-bold">S</span></Tool>
        </div>
        <time className="w-[94px] text-center text-[15px] leading-6">21:42<br />2023/7/12</time>
        <Tool w="w-[57px]" label="通知">
          <svg viewBox="0 0 28 32" className="mt-1 mr-1 h-8 w-7"><path d="M2 3h20v16h-7l-4 4v-4H2z" fill="#fff" /><path d="M5 8h14M5 12h14M5 16h8" stroke="#363632" strokeWidth="1.500" /><circle cx="20" cy="23" r="8.500" fill="#3d3d39" stroke="#999" /><text x="17" y="28" fontSize="12" fontWeight="700" fill="#fff" fontFamily="Open Sans">3</text></svg>
        </Tool>
        <span className="ml-[3px] h-full w-px bg-[#777]" />
      </div>
      <span className="pointer-events-none absolute right-4 bottom-1.5 font-['Liberation_Sans','Noto_Sans_CJK_SC',sans-serif] text-[17px] leading-6 text-white/60 [text-shadow:1px_1px_1px_#000]">CSDN @热冰侠客</span>
    </footer>
  );
}

export default function App() {
  return (
    <div className={"relative flex h-screen min-h-fit flex-col overflow-hidden " + ui}>
      <Toolbar />
      <div className="flex min-h-0 flex-1">
        <TabStrip />
        <div className="flex min-w-0 flex-1 flex-col">
          <Bookmarks />
          <div className="flex min-h-0 flex-1">
            <LoginPage />
            <Scrollbar />
          </div>
        </div>
        <Sidebar />
      </div>
      <Taskbar />
      <IePopup />
    </div>
  );
}
